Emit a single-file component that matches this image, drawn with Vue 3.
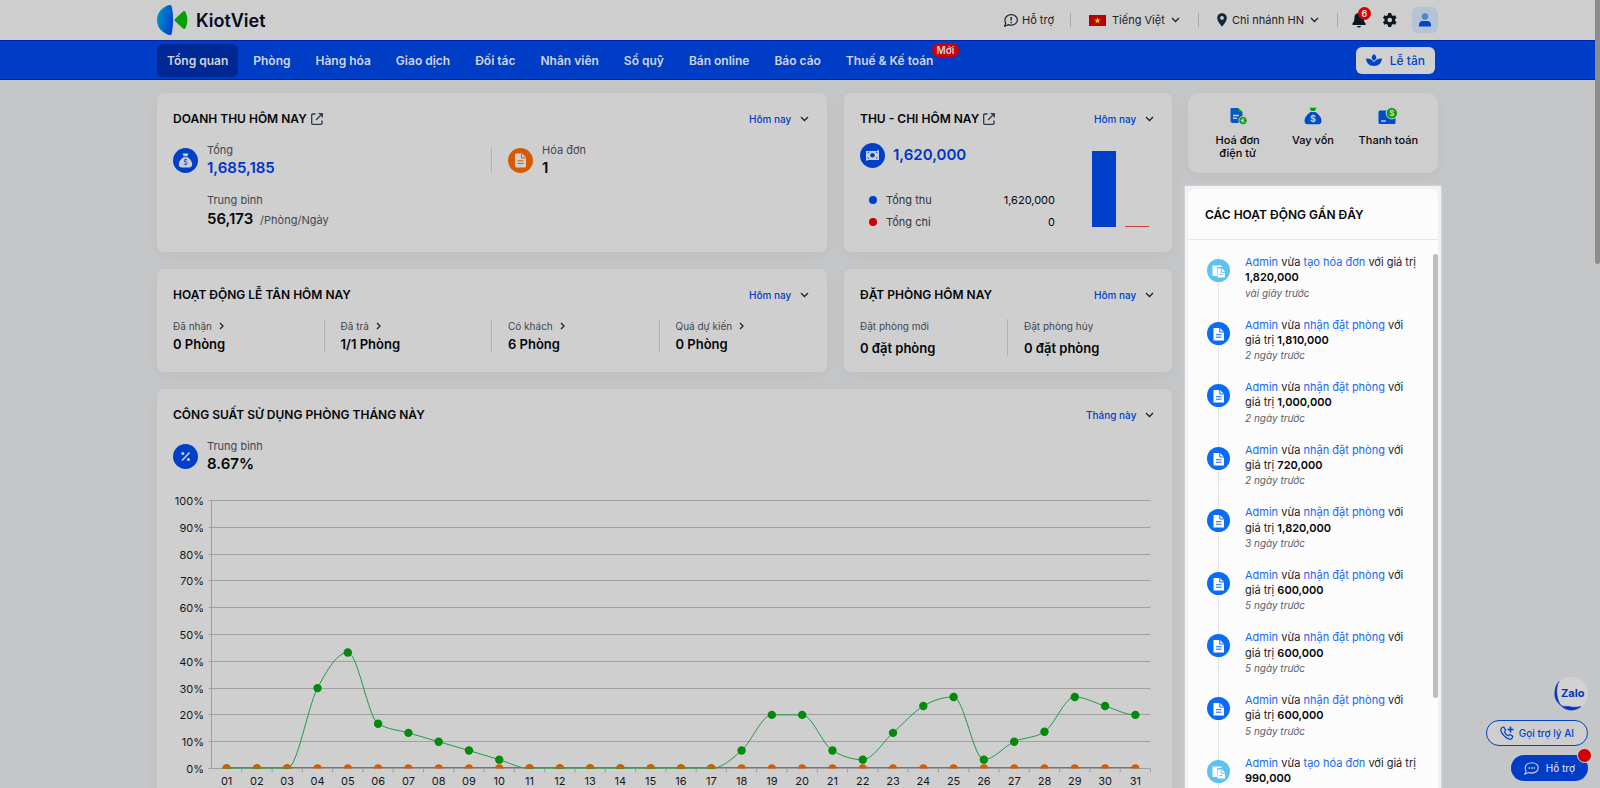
<template>
    <div class="layout">
        <header class="topbar">
            <div class="container topbar-inner">
                <a href="#" class="logo">
                    <svg width="31" height="32" viewBox="0 0 31 32">
                        <defs>
                            <linearGradient id="logo-blue" x1="0" y1="0" x2="1" y2="0.4">
                                <stop offset="0" stop-color="#00a0cc" />
                                <stop offset="1" stop-color="#0048cc" />
                            </linearGradient>
                        </defs>
                        <path d="M12 1C4.500 3.500 0 9 0 16s4.500 12.500 12 15c1.500 0.400 2.400-0.200 2.800-1.600C16.600 20 16.600 12 14.800 2.600 14.400 1.200 13.500 0.600 12 1z" fill="url(#logo-blue)" />
                        <path d="M18 15L26 7.500c1-0.800 2-0.600 2.600 0.500 2.400 5 2.400 11 0 16-0.600 1.100-1.600 1.300-2.600 0.500l-8-7.500c-0.700-0.700-0.700-1.300 0-2z" fill="#06a006" />
                    </svg>
                    <span>KiotViet</span>
                </a>
                <div class="topbar-menu">
                    <a href="#" class="topbar-link">
                        <svg width="14" height="13" viewBox="0 0 14 13" fill="none" stroke="#1b232b" stroke-width="1.2">
                            <path d="M7.200 0.700c3.500 0 6.200 2.300 6.200 5.200s-2.700 5.300-6.200 5.300c-1 0-2-0.200-2.800-0.600L0.700 12.200l1-3.200C1.200 8.200 0.900 7 0.900 5.900c0-2.900 2.800-5.200 6.300-5.200z" />
                            <path d="M7.200 3v3.600M7.200 7.800v1.400" stroke-width="1.400" />
                        </svg>
                        Hỗ trợ
                    </a>
                    <span class="divider"></span>
                    <label class="topbar-select">
                        <svg width="17" height="11" viewBox="0 0 17 11">
                            <rect width="17" height="11" fill="#b90000" />
                            <path d="M8.500 2.200l0.800 2.300h2.400l-1.900 1.500 0.700 2.400-2-1.400-2 1.400 0.700-2.400-1.900-1.500h2.400z" fill="#dfd600" />
                        </svg>
                        <select aria-label="Ngôn ngữ"><option>Tiếng Việt</option></select>
                        <svg class="chevron" width="9" height="6" viewBox="0 0 9 6"><path d="M1 1l3.500 3.500L8 1" /></svg>
                    </label>
                    <span class="divider"></span>
                    <label class="topbar-select branch">
                        <svg width="10" height="14" viewBox="0 0 10 14">
                            <path fill-rule="evenodd" d="M5 0.300c2.800 0 4.800 2 4.800 4.700 0 3-2.600 6-4.800 8.700C2.800 11 0.200 8 0.200 5 0.200 2.300 2.200 0.300 5 0.300zM5 3a1.900 1.900 0 1 0 0 3.800A1.900 1.900 0 0 0 5 3z" fill="#12263a" />
                        </svg>
                        <select aria-label="Chi nhánh"><option>Chi nhánh HN</option></select>
                        <svg class="chevron" width="9" height="6" viewBox="0 0 9 6"><path d="M1 1l3.500 3.500L8 1" /></svg>
                    </label>
                    <span class="divider"></span>
                    <button type="button" class="icon-btn bell" aria-label="Thông báo">
                        <svg width="14" height="16" viewBox="0 0 14 16" fill="#0d1722">
                            <path d="M7 1c-2.800 0-4.600 2-4.600 4.800 0 3-0.600 4.200-2 5.600v1.600h13.200v-1.600c-1.400-1.400-2-2.600-2-5.600C11.600 3 9.800 1 7 1z" />
                            <path d="M5 14h4c-0.200 1-1 1.600-2 1.600S5.200 15 5 14z" />
                        </svg>
                        <span class="bell-count">6</span>
                    </button>
                    <button type="button" class="icon-btn gear" aria-label="Thiết lập">
                        <svg width="14" height="14" viewBox="0 0 24 24">
                            <path fill="#0d1722" d="M20.700 13.600c0.100-0.500 0.100-1 0.100-1.600s0-1.100-0.100-1.600l2.600-2-2.700-4.700-3.200 1.300c-0.800-0.700-1.700-1.200-2.600-1.600L14.300 0H8.900l-0.500 3.400c-1 0.400-1.800 0.900-2.600 1.600L2.600 3.700-0.100 8.400l2.700 2c-0.100 0.500-0.100 1-0.100 1.600s0 1.100 0.100 1.600l-2.700 2 2.700 4.700 3.200-1.300c0.800 0.700 1.700 1.200 2.600 1.600l0.500 3.400h5.400l0.500-3.400c1-0.400 1.800-0.900 2.600-1.600l3.200 1.300 2.700-4.700zM11.600 16a4 4 0 1 1 0-8 4 4 0 0 1 0 8z" />
                        </svg>
                    </button>
                    <button type="button" class="icon-btn avatar" aria-label="Tài khoản">
                        <svg width="12" height="14" viewBox="0 0 12 14">
                            <circle cx="6" cy="3.500" r="3.200" fill="#4a86d6" />
                            <path d="M0 13.500V12c0-2.500 1.500-3.900 3.500-3.900h5c2 0 3.500 1.400 3.500 3.900v1.500z" fill="#0044c8" />
                        </svg>
                    </button>
                </div>
            </div>
        </header>

        <nav class="navbar">
            <div class="container navbar-inner">
                <a v-for="item in menu" :key="item.label" href="#" class="nav-link" :class="{ active: item.active }">
                    {{ item.label }}
                    <span v-if="item.badge" class="nav-badge">{{ item.badge }}</span>
                </a>
                <button type="button" class="reception-btn">
                    <svg width="16" height="13" viewBox="0 0 16 13" fill="#0044c8">
                        <path d="M8 0c1.600 1.200 2.300 2.300 2.300 3.600C10.300 4.800 9.300 6 8 7 6.700 6 5.700 4.800 5.700 3.600 5.700 2.300 6.400 1.200 8 0z" />
                        <path d="M0 4.500c3.700-0.300 6.600 1 8 4 1.400-3 4.300-4.300 8-4-0.300 4.500-3.200 7.500-8 7.500S0.300 9 0 4.500z" />
                    </svg>
                    Lễ tân
                </button>
            </div>
        </nav>

        <main class="container content">
            <div class="cards">
                <section class="card">
                    <div class="card-head">
                        <h2>DOANH THU HÔM NAY</h2>
                        <a href="#" class="open-link" aria-label="Xem chi tiết doanh thu">
                            <svg width="12" height="12" viewBox="0 0 12 12"><path d="M4.500 1H1.800Q0.700 1 0.700 2v8.300q0 1 1 1H10q1 0 1-1V7.500M7.500 0.700h3.800v3.800M11 1L5 7" /></svg>
                        </a>
                        <label class="filter">
                            <select aria-label="Thời gian doanh thu"><option>Hôm nay</option></select>
                            <svg class="chevron" width="9" height="6" viewBox="0 0 9 6"><path d="M1 1l3.500 3.500L8 1" /></svg>
                        </label>
                    </div>
                    <div class="cells">
                        <div class="cell stat">
                            <svg class="stat-icon" viewBox="0 0 25 25">
                                <circle cx="12.500" cy="12.500" r="12.500" fill="#0040c8" />
                                <path d="M9.500 5.500h6l-1.200 2.800h-3.600zM10.400 9.200h4.200c2.800 2 4.600 4.500 4.600 7 0 2.200-1.200 3.300-3.200 3.300H9c-2 0-3.200-1.100-3.200-3.300 0-2.500 1.800-5 4.600-7z" fill="#d0d0d0" />
                                <text x="12.500" y="17" text-anchor="middle" font-size="7" fill="#0040c8">$</text>
                            </svg>
                            <div>
                                <div class="label">Tổng</div>
                                <div class="value blue">1,685,185</div>
                            </div>
                        </div>
                        <div class="cell stat">
                            <svg class="stat-icon" viewBox="0 0 25 25">
                                <circle cx="12.500" cy="12.500" r="12.500" fill="#d65a00" />
                                <path d="M8 5.500h6l4 4V18q0 1.500-1.500 1.500H8.500Q7 19.500 7 18V6.500q0-1 1-1z" fill="#d0d0d0" />
                                <path d="M13.500 6v4h4M9.500 12.800h6M9.500 15.500h6" fill="none" stroke="#d65a00" />
                            </svg>
                            <div>
                                <div class="label">Hóa đơn</div>
                                <div class="value">1</div>
                            </div>
                        </div>
                    </div>
                    <div class="average">
                        <div class="label">Trung bình</div>
                        <div class="value">56,173 <span class="unit">/Phòng/Ngày</span></div>
                    </div>
                </section>

                <section class="card">
                    <div class="card-head">
                        <h2>THU - CHI HÔM NAY</h2>
                        <a href="#" class="open-link" aria-label="Xem chi tiết thu chi">
                            <svg width="12" height="12" viewBox="0 0 12 12"><path d="M4.500 1H1.800Q0.700 1 0.700 2v8.300q0 1 1 1H10q1 0 1-1V7.500M7.500 0.700h3.800v3.800M11 1L5 7" /></svg>
                        </a>
                        <label class="filter">
                            <select aria-label="Thời gian thu chi"><option>Hôm nay</option></select>
                            <svg class="chevron" width="9" height="6" viewBox="0 0 9 6"><path d="M1 1l3.500 3.500L8 1" /></svg>
                        </label>
                    </div>
                    <div class="cashflow">
                        <div class="cashflow-info">
                            <div class="cashflow-total">
                                <svg class="stat-icon" viewBox="0 0 25 25">
                                    <circle cx="12.500" cy="12.500" r="12.500" fill="#0040c8" />
                                    <path d="M6 8h11l1-1.500 1 1.500v9H8l-1 1-1-1z" fill="#d0d0d0" />
                                    <circle cx="12.500" cy="12.300" r="2.300" fill="#0040c8" />
                                    <path d="M7.500 10l1.500-1M16 9l1.500 1M7.500 14.500l1.500 1.300M16 15.500l1.500-1.300" stroke="#0040c8" />
                                </svg>
                                <span class="value blue">1,620,000</span>
                            </div>
                            <dl class="legend">
                                <div v-for="row in cashflow" :key="row.label">
                                    <dt :class="row.tone">{{ row.label }}</dt>
                                    <dd>{{ row.value }}</dd>
                                </div>
                            </dl>
                        </div>
                        <div class="bars">
                            <span v-for="row in cashflow" :key="row.label" :class="row.tone" :style="{ height: row.height + 'px' }"></span>
                        </div>
                    </div>
                </section>

                <section class="card">
                    <div class="card-head">
                        <h2>HOẠT ĐỘNG LỄ TÂN HÔM NAY</h2>
                        <label class="filter">
                            <select aria-label="Thời gian hoạt động lễ tân"><option>Hôm nay</option></select>
                            <svg class="chevron" width="9" height="6" viewBox="0 0 9 6"><path d="M1 1l3.500 3.500L8 1" /></svg>
                        </label>
                    </div>
                    <div class="cells">
                        <div v-for="room in rooms" :key="room.label" class="cell">
                            <a href="#" class="label small">
                                {{ room.label }}
                                <svg class="chevron" width="5" height="8" viewBox="0 0 5 8"><path d="M1 1l3 3-3 3" /></svg>
                            </a>
                            <div class="value medium">{{ room.value }}</div>
                        </div>
                    </div>
                </section>

                <section class="card">
                    <div class="card-head">
                        <h2>ĐẶT PHÒNG HÔM NAY</h2>
                        <label class="filter">
                            <select aria-label="Thời gian đặt phòng"><option>Hôm nay</option></select>
                            <svg class="chevron" width="9" height="6" viewBox="0 0 9 6"><path d="M1 1l3.500 3.500L8 1" /></svg>
                        </label>
                    </div>
                    <div class="cells">
                        <div v-for="booking in bookings" :key="booking.label" class="cell spaced">
                            <div class="label small">{{ booking.label }}</div>
                            <div class="value medium">{{ booking.value }}</div>
                        </div>
                    </div>
                </section>

                <section class="card wide">
                    <div class="card-head">
                        <h2>CÔNG SUẤT SỬ DỤNG PHÒNG THÁNG NÀY</h2>
                        <label class="filter">
                            <select aria-label="Thời gian công suất phòng"><option>Tháng này</option></select>
                            <svg class="chevron" width="9" height="6" viewBox="0 0 9 6"><path d="M1 1l3.500 3.500L8 1" /></svg>
                        </label>
                    </div>
                    <div class="stat">
                        <svg class="stat-icon" viewBox="0 0 25 25">
                            <circle cx="12.500" cy="12.500" r="12.500" fill="#0040c8" />
                            <path d="M9 16.500L16.500 8.500" stroke="#d0d0d0" stroke-width="1.600" />
                            <circle cx="9.800" cy="9.600" r="1.500" fill="#d0d0d0" />
                            <circle cx="15.400" cy="15.400" r="1.500" fill="#d0d0d0" />
                        </svg>
                        <div>
                            <div class="label">Trung bình</div>
                            <div class="value">8.67%</div>
                        </div>
                    </div>
                    <svg class="chart" viewBox="0 0 983 310">
                        <defs>
                            <clipPath id="plot"><rect x="38" y="0" width="940" :height="chart.bottom" /></clipPath>
                        </defs>
                        <g v-for="tick in yTicks" :key="tick.label">
                            <line :x1="chart.left - 3" :x2="chart.right" :y1="tick.y" :y2="tick.y" class="grid" />
                            <text :x="31" :y="tick.y + 4" text-anchor="end">{{ tick.label }}</text>
                        </g>
                        <line :x1="chart.left" :x2="chart.left" :y1="chart.top" :y2="chart.bottom" class="grid" />
                        <g v-for="point in points" :key="point.label">
                            <line :x1="point.x + chart.step / 2" :x2="point.x + chart.step / 2" :y1="chart.bottom" :y2="chart.bottom + 4" class="grid" />
                            <text :x="point.x" :y="chart.bottom + 16" text-anchor="middle">{{ point.label }}</text>
                        </g>
                        <g clip-path="url(#plot)">
                            <path :d="curve" class="curve" />
                            <circle v-for="point in points" :key="point.label" :cx="point.x" :cy="point.y" r="4.200" fill="#038a0c" />
                            <line :x1="points[0].x" :x2="points[30].x" :y1="chart.bottom - 1" :y2="chart.bottom - 1" class="base" />
                            <circle v-for="point in points" :key="point.label" :cx="point.x" :cy="chart.bottom" r="4.200" fill="#d65a00" />
                        </g>
                    </svg>
                </section>
            </div>

            <aside class="side">
                <div class="shortcuts">
                    <a href="#" class="shortcut">
                        <svg width="18" height="18" viewBox="0 0 18 18">
                            <path d="M2.500 1H9l4.500 4v9q0 2-2 2h-8q-2 0-2-2V2q0-1 1-1z" fill="#0058c8" />
                            <path d="M9 1l4.500 4.300H10q-1 0-1-1z" fill="#06a006" />
                            <path d="M4 8.500h6M4 11.300h4" stroke="#cecece" stroke-width="1.400" />
                            <circle cx="14" cy="13.500" r="4.200" fill="#06a006" stroke="#cecece" />
                            <path d="M15.600 12q-3.200-1-3.200 1.500t3.200 1.500M12 13.500h3" fill="none" stroke="#cecece" />
                        </svg>
                        Hoá đơn điện tử
                    </a>
                    <a href="#" class="shortcut">
                        <svg width="18" height="18" viewBox="0 0 18 18">
                            <path d="M5.500 0.800h7l-1.700 3.200H7.200z" fill="#06a006" />
                            <path d="M6.500 5h5c3.400 2.200 6 6 6 8.800 0 2.400-1 3.400-3 3.400h-11c-2 0-3-1-3-3.400C0.500 11 3.100 7.200 6.500 5z" fill="#004cc8" />
                            <text x="9" y="14.500" text-anchor="middle" font-size="9" font-weight="700" fill="#cecece">$</text>
                        </svg>
                        Vay vốn
                    </a>
                    <a href="#" class="shortcut">
                        <svg width="20" height="18" viewBox="0 0 20 18">
                            <path d="M2 3.500h14q1.500 0 1.500 1.500v10.500q0 1.500-1.500 1.500H2Q0.500 17 0.500 15.500V5Q0.500 3.500 2 3.500z" fill="#004cc8" />
                            <path d="M3 14h5" stroke="#cecece" stroke-width="1.400" />
                            <circle cx="13.800" cy="6.200" r="5.700" fill="#06a006" stroke="#cecece" />
                            <text x="13.800" y="9" text-anchor="middle" font-size="8" font-weight="700" fill="#cecece">$</text>
                        </svg>
                        Thanh toán
                    </a>
                </div>

                <div class="spotlight">
                    <section class="activities">
                        <h2>CÁC HOẠT ĐỘNG GẦN ĐÂY</h2>
                        <ul class="timeline">
                            <li v-for="(activity, index) in activities" :key="index">
                                <svg v-if="activity.invoice" class="timeline-icon" viewBox="0 0 23 23">
                                    <circle cx="11.500" cy="11.500" r="11.500" fill="#5bc3f0" />
                                    <path d="M5.500 6.500h9V8H10v9H5.500z" fill="#fff" />
                                    <path d="M10.500 9.500h4.500l3 3v6h-7.500z" fill="#fff" />
                                    <path d="M14.200 9.500v3.800h3.800M12.500 15.500h3" fill="none" stroke="#5bc3f0" />
                                </svg>
                                <svg v-else class="timeline-icon" viewBox="0 0 23 23">
                                    <circle cx="11.500" cy="11.500" r="11.500" fill="#0a6cf5" />
                                    <path d="M6.500 6h6.500l4 4v8.500H6.500z" fill="#fff" />
                                    <path d="M12.800 6v4H17M9 12.700h5.500M9 15.200h5.500" fill="none" stroke="#0a6cf5" />
                                </svg>
                                <div>
                                    <p><a href="#">Admin</a> vừa <a href="#">{{ activity.invoice ? 'tạo hóa đơn' : 'nhận đặt phòng' }}</a> với giá trị <strong>{{ activity.amount }}</strong></p>
                                    <time>{{ activity.time }}</time>
                                </div>
                            </li>
                        </ul>
                        <span class="panel-scroll"></span>
                    </section>
                </div>
            </aside>
        </main>

        <div class="floating">
            <a href="#" class="zalo">
                <svg width="34" height="34" viewBox="0 0 34 34">
                    <circle cx="17.500" cy="16.500" r="16.500" fill="#d2d2d2" />
                    <path d="M5 4.500C1.800 9 1.800 22 7 28.500 3.500 26 0.800 22 0.800 16.500 0.800 11 2.500 7 5 4.500zM7 28.500c3 1.500 7 0.600 9 1.200 3 0.800 7 0.800 11-0.200-3 2.500-6.500 3.600-10 3.600-4 0-7.500-1.800-10-4.600z" fill="#0036bd" stroke="#0036bd" stroke-width="0.600" />
                </svg>
                <span>Zalo</span>
            </a>
            <button type="button" class="float-btn outline">
                <svg width="14" height="14" viewBox="0 0 14 14" fill="none" stroke="#0044c8" stroke-width="1.200">
                    <path d="M3.800 1L1.500 2C0.400 3.500 1 6.500 4 9.700s6.300 4 7.800 3l1-2.400-2.900-1.800L8.200 9.800C6.500 9 5.300 7.700 4.500 6L5.600 4.100z" />
                    <path d="M10.500 0.500v6M7.500 3.500h6" stroke-width="1.600" />
                </svg>
                Gọi trợ lý AI
            </button>
            <button type="button" class="float-btn solid">
                <svg width="15" height="13" viewBox="0 0 15 13" fill="none" stroke="#d0d0d0" stroke-width="1.100">
                    <path d="M7.800 0.700c3.700 0 6.500 2.200 6.500 5.100s-2.800 5.300-6.500 5.300c-1.100 0-2.100-0.200-3-0.500L0.900 12l1.200-3C1.500 8 1.200 7 1.200 5.800c0-2.900 2.900-5.100 6.600-5.100z" />
                    <path d="M4.500 5.900H6M7 5.900h1.500M9.500 5.900H11" stroke-width="1.500" />
                </svg>
                Hỗ trợ
                <span class="float-dot"></span>
            </button>
        </div>
        <span class="page-scroll"></span>
    </div>
</template>

<script setup>
const menu = [
    { label: 'Tổng quan', active: true },
    { label: 'Phòng' },
    { label: 'Hàng hóa' },
    { label: 'Giao dịch' },
    { label: 'Đối tác' },
    { label: 'Nhân viên' },
    { label: 'Sổ quỹ' },
    { label: 'Bán online' },
    { label: 'Báo cáo' },
    { label: 'Thuế & Kế toán', badge: 'Mới' }
];

const cashflow = [
    { label: 'Tổng thu', value: '1,620,000', tone: 'income', height: 76 },
    { label: 'Tổng chi', value: '0', tone: 'expense', height: 1 }
];

const rooms = [
    { label: 'Đã nhận', value: '0 Phòng' },
    { label: 'Đã trả', value: '1/1 Phòng' },
    { label: 'Có khách', value: '6 Phòng' },
    { label: 'Quá dự kiến', value: '0 Phòng' }
];

const bookings = [
    { label: 'Đặt phòng mới', value: '0 đặt phòng' },
    { label: 'Đặt phòng hủy', value: '0 đặt phòng' }
];

const activities = [
    { invoice: true, amount: '1,820,000', time: 'vài giây trước' },
    { amount: '1,810,000', time: '2 ngày trước' },
    { amount: '1,000,000', time: '2 ngày trước' },
    { amount: '720,000', time: '2 ngày trước' },
    { amount: '1,820,000', time: '3 ngày trước' },
    { amount: '600,000', time: '5 ngày trước' },
    { amount: '600,000', time: '5 ngày trước' },
    { amount: '600,000', time: '5 ngày trước' },
    { invoice: true, amount: '990,000' }
];

const usage = [
    0, 0, 0, 30, 43.3, 16.7, 13.3, 10, 6.7, 3.3, 0, 0, 0, 0, 0, 0, 0, 6.7, 20, 20,
    6.7, 3.3, 13.3, 23.3, 26.7, 3.3, 10, 13.7, 26.7, 23.3, 20
];

const chart = { left: 38.5, right: 977.5, top: 12.5, bottom: 280.5, step: 939 / 31 };

const toY = (percent) => chart.bottom - (percent / 100) * (chart.bottom - chart.top);

const yTicks = Array.from({ length: 11 }, (_, i) => ({
    label: `${i * 10}%`,
    y: Math.floor(toY(i * 10)) + 0.5
}));

const points = usage.map((percent, i) => ({
    label: String(i + 1).padStart(2, '0'),
    x: chart.left + chart.step * (i + 0.5),
    y: toY(percent)
}));

// monotone cubic: flat at every peak and valley, so the line never dips below zero
const slopes = points.map((point, i) => {
    if (i === 0 || i === points.length - 1) return 0;
    const before = point.y - points[i - 1].y;
    const after = points[i + 1].y - point.y;
    if (before * after <= 0) return 0;
    return Math.sign(before) * Math.min(Math.abs(before), Math.abs(after), Math.abs(before + after) / 4) * 2;
});

const curve = points.reduce((path, point, i) => {
    if (i === 0) return `M${point.x},${point.y}`;
    const prev = points[i - 1];
    const third = chart.step / 3;
    return `${path}C${prev.x + third},${prev.y + slopes[i - 1] / 3} ${point.x - third},${point.y - slopes[i] / 3} ${point.x},${point.y}`;
}, '');
</script>

<style>
body {
    margin: 0;
}
</style>

<style scoped>
.layout {
    position: relative;
    height: 100vh;
    overflow: hidden;
    padding-right: 5px;
    box-sizing: border-box;
    background: #c5c6c8;
    color: #05070a;
    font-family: Inter, "Liberation Sans", sans-serif;
    font-size: 12px;
}

.layout * {
    box-sizing: border-box;
}

a {
    color: inherit;
    text-decoration: none;
}

button,
select {
    font: inherit;
    color: inherit;
    border: 0;
    padding: 0;
    background: none;
}

select {
    appearance: none;
}

h2 {
    margin: 0;
    font-size: 12px;
    line-height: 17px;
    font-weight: 600;
}

.container {
    max-width: 1281px;
    margin: 0 auto;
}

.chevron {
    fill: none;
    stroke: #1b232b;
    stroke-width: 1.3;
    flex: none;
}

/* top bar */
.topbar,
.navbar {
    margin-right: -5px;
    padding-right: 5px;
}

.topbar {
    background: #cecece;
}

.topbar-inner {
    display: flex;
    align-items: center;
    justify-content: space-between;
    height: 40px;
}

.logo {
    display: flex;
    align-items: center;
    gap: 8px;
    color: #050a24;
    font-size: 18px;
    font-weight: 600;
}

.topbar-menu,
.topbar-link,
.topbar-select {
    display: flex;
    align-items: center;
}

.topbar-menu {
    font-size: 11px;
    color: #1b232b;
}

.topbar-link {
    gap: 4px;
    margin-right: -2px;
}

.topbar-select {
    gap: 6px;
}

.topbar-select.branch {
    gap: 5px;
}

.topbar-menu .divider {
    width: 1px;
    height: 14px;
    margin: 0 18px;
    background: #a9a9a9;
}

.icon-btn {
    position: relative;
    display: flex;
    align-items: center;
    justify-content: center;
}

.bell {
    margin-left: -4px;
}

.bell-count {
    position: absolute;
    top: -5px;
    left: 6px;
    width: 13px;
    border-radius: 7px;
    background: #d60000;
    color: #e6e6e6;
    font-size: 9px;
    line-height: 13px;
    font-weight: 600;
    text-align: center;
}

.gear {
    margin-left: 17px;
}

.avatar {
    width: 26px;
    height: 26px;
    margin-left: 15px;
    border-radius: 6px;
    background: #b4c3d6;
}

/* navigation */
.navbar {
    background: #003dc6;
    border-top: 1px solid #0024b0;
    border-bottom: 1px solid #0024b0;
}

.navbar-inner {
    display: flex;
    align-items: center;
    gap: 5px;
    height: 38px;
}

.nav-link {
    position: relative;
    padding: 0 10px;
    border-radius: 6px;
    color: #d2d5dc;
    line-height: 33px;
    font-weight: 600;
    white-space: nowrap;
}

.nav-link.active {
    background: #002894;
}

.nav-badge {
    position: absolute;
    top: -1px;
    right: -16px;
    padding: 0 5px;
    border-radius: 7px;
    background: #d00000;
    font-size: 10px;
    line-height: 14px;
}

.reception-btn {
    display: flex;
    align-items: center;
    gap: 8px;
    height: 27px;
    margin-left: auto;
    margin-right: 3px;
    padding: 0 10px;
    border-radius: 6px;
    background: #d0d0d0;
    color: #0044c8;
    font-weight: 500;
}

/* dashboard */
.content {
    display: flex;
    align-items: flex-start;
    gap: 16px;
    padding-top: 13px;
}

.cards {
    flex: 1;
    min-width: 0;
    display: grid;
    grid-template-columns: 1fr 328px;
    gap: 17px;
}

.card {
    padding: 17px 0 14px;
    border-radius: 7px;
    background: #cfcfcf;
    box-shadow: 0 4px 16px rgba(0, 10, 30, 0.04);
}

.card.wide {
    grid-column: 1 / -1;
}

.card-head {
    display: flex;
    align-items: center;
    height: 17px;
    margin-bottom: 15px;
    padding: 0 18px 0 16px;
}

.open-link {
    display: flex;
    margin-left: 4px;
}

.open-link path {
    fill: none;
    stroke: #2b3b4b;
    stroke-width: 1.3;
}

.filter {
    display: flex;
    align-items: center;
    gap: 8px;
    margin-left: auto;
    color: #0040c8;
    font-size: 10px;
    font-weight: 500;
}

.cells {
    display: flex;
}

.cell {
    position: relative;
    flex: 1;
    padding-left: 16px;
}

.cell:not(:last-child)::after {
    content: "";
    position: absolute;
    top: 1px;
    bottom: 2px;
    right: 0;
    width: 1px;
    background: #b4b4b4;
}

.stat {
    display: flex;
    align-items: center;
    gap: 9px;
    padding-left: 16px;
}

.cell.stat::after {
    top: 5px;
    bottom: 5px;
}

.stat-icon {
    width: 25px;
    height: 25px;
    flex: none;
}

.label {
    color: #41484f;
    font-size: 11px;
    line-height: 16px;
}

.label.small {
    display: flex;
    align-items: center;
    gap: 7px;
    font-size: 10px;
}

.value {
    font-size: 15px;
    line-height: 20px;
    font-weight: 600;
}

.value.medium {
    font-size: 13px;
}

.value.blue {
    color: #0034c8;
}

.spaced .value {
    margin-top: 4px;
}

.average {
    margin-top: 14px;
    padding-left: 50px;
}

.average .value {
    margin-top: 1px;
}

.unit {
    margin-left: 3px;
    color: #41484f;
    font-size: 11px;
    font-weight: 400;
}

.cashflow {
    display: flex;
    align-items: flex-end;
    gap: 37px;
    padding: 0 23px 5px 16px;
}

.cashflow-info {
    flex: 1;
}

.cashflow-total {
    display: flex;
    align-items: center;
    gap: 8px;
    height: 26px;
}

.legend {
    margin: 21px 0 0;
    padding-left: 9px;
    font-size: 11px;
    line-height: 22px;
}

.legend div {
    display: flex;
    justify-content: space-between;
}

.legend dt {
    display: flex;
    align-items: center;
    gap: 9px;
    color: #30363c;
}

.legend dt::before {
    content: "";
    width: 8px;
    height: 8px;
    border-radius: 50%;
    background: currentColor;
}

.legend dt.income::before {
    background: #0040c8;
}

.legend dt.expense::before {
    background: #cc0000;
}

.legend dd {
    margin: 0;
}

.bars {
    display: flex;
    align-items: flex-end;
    gap: 9px;
    margin-bottom: 6px;
}

.bars span {
    width: 24px;
    background: #d23c34;
}

.bars .income {
    background: #0040c8;
}

.chart {
    display: block;
    width: calc(100% - 32px);
    margin: 14px 16px 0;
    font-size: 11px;
    fill: #14181c;
}

.chart .grid {
    stroke: #a0a0a0;
}

.chart .curve {
    fill: none;
    stroke: #1f9a48;
}

.chart .base {
    stroke: #8a7440;
}

/* right column */
.side {
    flex: none;
    width: 250px;
}

.shortcuts {
    display: grid;
    grid-template-columns: repeat(3, 1fr);
    padding: 14px 12px 13px;
    border-radius: 10px;
    background: #cecece;
    box-shadow: 0 4px 16px rgba(0, 10, 30, 0.04);
}

.shortcut {
    display: flex;
    flex-direction: column;
    align-items: center;
    gap: 9px;
    padding: 0 6px;
    font-size: 11px;
    line-height: 13px;
    font-weight: 500;
    text-align: center;
}

.shortcut:last-child {
    padding: 0;
}

.spotlight {
    margin: 13px -3px 0;
    padding: 3px;
    background: #f1f2f4;
    box-shadow: 0 0 2px rgba(255, 255, 255, 0.6);
}

.activities {
    position: relative;
    border-radius: 7px 7px 0 0;
    background: #fcfcfc;
    color: #1b232b;
}

.activities h2 {
    padding: 17px 17px 16px;
    border-bottom: 1px solid #e6e7e9;
    color: #05070a;
}

.timeline {
    margin: 0;
    padding: 15px 20px 0 19px;
    list-style: none;
    font-size: 11px;
    line-height: 1.39;
}

.timeline li {
    position: relative;
    display: flex;
    gap: 15px;
    padding-bottom: 17px;
}

.timeline li::before {
    content: "";
    position: absolute;
    top: 0;
    bottom: 0;
    left: 11px;
    width: 1px;
    background: #e2e4e8;
}

.timeline-icon {
    position: relative;
    width: 23px;
    height: 23px;
    margin-top: 4px;
    flex: none;
}

.timeline p {
    margin: 0;
}

.timeline a {
    color: #1a6af0;
}

.timeline strong {
    color: #05070a;
    font-weight: 600;
}

.timeline time {
    display: block;
    color: #5a6068;
    font-size: 10px;
    line-height: 15px;
    font-style: italic;
}

.panel-scroll,
.page-scroll {
    position: absolute;
    right: 0;
    width: 5px;
    border-radius: 3px;
}

.panel-scroll {
    top: 65px;
    height: 444px;
    background: #bcbcbc;
}

.page-scroll {
    top: 0;
    height: 264px;
    border-radius: 0 0 3px 3px;
    background: #8c8c8c;
}

/* floating contacts */
.floating {
    position: absolute;
    right: 12px;
    bottom: 7px;
    display: flex;
    flex-direction: column;
    align-items: flex-end;
    gap: 9px;
    font-size: 10px;
    font-weight: 500;
}

.zalo {
    position: relative;
    display: flex;
}

.zalo span {
    position: absolute;
    top: 8px;
    left: 7px;
    color: #0036bd;
    font-size: 11px;
    line-height: 16px;
    font-weight: 700;
}

.float-btn {
    position: relative;
    display: flex;
    align-items: center;
    gap: 5px;
    height: 26px;
    padding: 0 13px;
    border-radius: 13px;
}

.float-btn.outline {
    border: 1px solid #0044c8;
    background: #cecece;
    color: #0044c8;
}

.float-btn.solid {
    gap: 7px;
    background: #003dc6;
    color: #d2d5dc;
}

.float-dot {
    position: absolute;
    top: -7px;
    right: -4px;
    width: 15px;
    height: 15px;
    border: 1px solid #d8d8d8;
    border-radius: 50%;
    background: #d00000;
}
</style>
